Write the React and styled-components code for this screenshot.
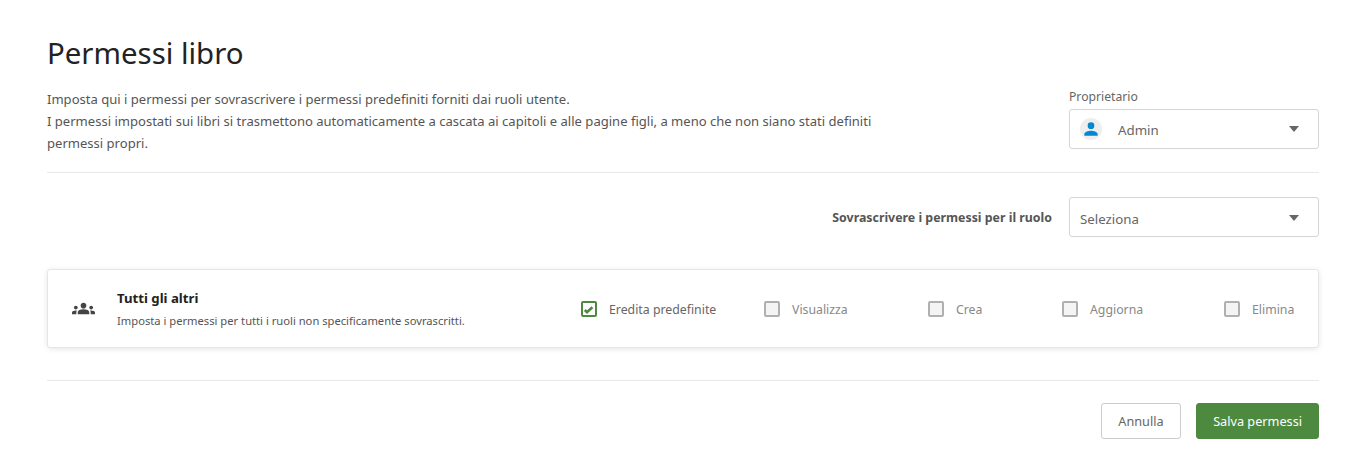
import React from "react";
import styled, { createGlobalStyle } from "styled-components";

const Global = createGlobalStyle`
  html, body { margin: 0; padding: 0; background: #fff; }
  body { font-family: "Noto Sans", "Open Sans", sans-serif; color: #444; }
`;

const Page = styled.div`
  width: 1364px;
  height: 460px;
  box-sizing: border-box;
  padding: 33px 45px 0 47px;
  overflow: hidden;
`;

const Title = styled.h1`
  margin: 0;
  font-size: 29.4px;
  line-height: 40px;
  font-weight: 400;
  color: #222;
`;

const Head = styled.div`
  display: flex;
  justify-content: space-between;
  align-items: flex-start;
  margin-top: 5px;
  padding-bottom: 18px;
  border-bottom: 1px solid #e8e8e8;
`;

const Intro = styled.p`
  margin: 10px 0 0;
  width: 850px;
  font-size: 13.05px;
  line-height: 22px;
  color: #555;
`;

const OwnerCol = styled.div`
  width: 250px;
  margin-top: 11px;
`;

const OwnerLabel = styled.div`
  font-size: 12.2px;
  line-height: 16px;
  color: #666;
  margin-bottom: 4px;
`;

const Select = styled.div`
  width: 250px;
  height: 40px;
  box-sizing: border-box;
  border: 1px solid #d4d4d4;
  border-radius: 3px;
  display: flex;
  align-items: center;
  padding: 0 19px 0 10px;
  font-size: 13.3px;
  color: #666;
`;

const SelectText = styled.span`
  padding-top: ${(p) => (p.$low ? "4px" : "2px")};
`;

const Avatar = styled.span`
  width: 22px;
  height: 22px;
  border-radius: 50%;
  background: #eee;
  display: flex;
  align-items: center;
  justify-content: center;
  margin-right: 16px;
`;

const Caret = styled.span`
  margin-left: auto;
  margin-top: ${(p) => (p.$low ? "2px" : "0")};
  width: 0;
  height: 0;
  border-left: 5.5px solid transparent;
  border-right: 5.5px solid transparent;
  border-top: 6px solid #666;
`;

const RoleRow = styled.div`
  display: flex;
  justify-content: flex-end;
  align-items: center;
  gap: 17px;
  margin-top: 24px;
`;

const RoleLabel = styled.label`
  font-size: 12.37px;
  font-weight: 700;
  color: #555;
`;

const Card = styled.div`
  margin-top: 32px;
  height: 79px;
  box-sizing: border-box;
  border: 1px solid #e6e6e6;
  border-radius: 3px;
  background: #fff;
  box-shadow: 0 1px 6px -1px rgba(0, 0, 0, 0.14);
  display: flex;
  align-items: center;
  padding: 0 24px;
`;

const RoleIcon = styled.svg`
  width: 23px;
  height: 23px;
  fill: #444;
  margin-right: 22px;
  flex: none;
`;

const RoleInfo = styled.div`
  width: 464px;
  flex: none;
  padding-top: 1px;
`;

const RoleName = styled.div`
  font-size: 13.2px;
  line-height: 18px;
  font-weight: 700;
  color: #222;
`;

const RoleDesc = styled.div`
  font-size: 11.2px;
  line-height: 16px;
  margin-top: 6px;
  color: #555;
`;

const Perms = styled.div`
  flex: 1;
  display: grid;
  grid-template-columns: 183px 164px 134px 162px auto;
  align-items: center;
`;

const Perm = styled.div`
  display: flex;
  align-items: center;
  gap: 12px;
  font-size: 12.3px;
  color: ${(p) => (p.$on ? "#666" : "#888")};
`;

const PermLabel = styled.span`
  padding-top: 2px;
`;

const Box = styled.span`
  width: 16px;
  height: 16px;
  box-sizing: border-box;
  border-radius: 2px;
  border: 2px solid ${(p) => (p.$on ? "#4d8a3f" : "#b0b0b0")};
  background: ${(p) => (p.$on ? "#fff" : "#f4f4f4")};
  display: flex;
  align-items: center;
  justify-content: center;
`;

const Foot = styled.div`
  margin-top: 32px;
  border-top: 1px solid #e8e8e8;
  padding-top: 22px;
  display: flex;
  justify-content: flex-end;
  gap: 15px;
`;

const Button = styled.button`
  height: 36px;
  box-sizing: border-box;
  padding: 0 ${(p) => (p.$primary ? "16px" : "16.5px")};
  border-radius: 3px;
  font-family: inherit;
  font-size: 12.7px;
  border: 1px solid ${(p) => (p.$primary ? "#4d8a3f" : "#ccc")};
  background: ${(p) => (p.$primary ? "#4d8a3f" : "#fff")};
  color: ${(p) => (p.$primary ? "#fff" : "#666")};
`;

const perms = [
  { label: "Eredita predefinite", on: true },
  { label: "Visualizza" },
  { label: "Crea" },
  { label: "Aggiorna" },
  { label: "Elimina" },
];

export default function App() {
  return (
    <>
      <Global />
      <Page>
        <Title>Permessi libro</Title>
        <Head>
          <Intro>
            Imposta qui i permessi per sovrascrivere i permessi predefiniti forniti dai ruoli utente.
            <br />
            I permessi impostati sui libri si trasmettono automaticamente a cascata ai capitoli e alle pagine figli, a meno che non siano stati definiti permessi propri.
          </Intro>
          <OwnerCol>
            <OwnerLabel>Proprietario</OwnerLabel>
            <Select>
              <Avatar>
                <svg width="16" height="16" viewBox="0 0 24 24" fill="#0288d1">
                  <path d="M12 12a5 5 0 1 0 0-10 5 5 0 0 0 0 10zm0 2.5c-3.3 0-10 1.7-10 5V22h20v-2.5c0-3.3-6.7-5-10-5z" />
                </svg>
              </Avatar>
              <SelectText>Admin</SelectText>
              <Caret />
            </Select>
          </OwnerCol>
        </Head>
        <RoleRow>
          <RoleLabel>Sovrascrivere i permessi per il ruolo</RoleLabel>
          <Select>
            <SelectText $low>Seleziona</SelectText>
            <Caret $low />
          </Select>
        </RoleRow>
        <Card>
          <RoleIcon viewBox="0 0 24 24">
            <path d="M12 12.75c1.63 0 3.07.39 4.24.9 1.08.48 1.76 1.56 1.76 2.73V18H6v-1.61c0-1.18.68-2.26 1.76-2.73 1.17-.52 2.61-.91 4.24-.91zM4 13c1.1 0 2-.9 2-2s-.9-2-2-2-2 .9-2 2 .9 2 2 2zm1.13 1.1C4.76 14.04 4.39 14 4 14c-.99 0-1.93.21-2.78.58C.48 14.9 0 15.62 0 16.43V18h4.5v-1.61c0-.83.23-1.61.63-2.29zM20 13c1.1 0 2-.9 2-2s-.9-2-2-2-2 .9-2 2 .9 2 2 2zm4 3.43c0-.81-.48-1.53-1.22-1.85-.85-.37-1.79-.58-2.78-.58-.39 0-.76.04-1.13.1.4.68.63 1.46.63 2.29V18H24v-1.57zM12 6c1.66 0 3 1.34 3 3s-1.34 3-3 3-3-1.34-3-3 1.34-3 3-3z" />
          </RoleIcon>
          <RoleInfo>
            <RoleName>Tutti gli altri</RoleName>
            <RoleDesc>Imposta i permessi per tutti i ruoli non specificamente sovrascritti.</RoleDesc>
          </RoleInfo>
          <Perms>
            {perms.map((p) => (
              <Perm key={p.label} $on={p.on}>
                <Box $on={p.on}>
                  {p.on && (
                    <svg width="12" height="12" viewBox="0 0 12 12" fill="none" stroke="#4d8a3f" strokeWidth="2.6">
                      <path d="M1.8 7 4 9.2 9.4 4.2" />
                    </svg>
                  )}
                </Box>
                <PermLabel>{p.label}</PermLabel>
              </Perm>
            ))}
          </Perms>
        </Card>
        <Foot>
          <Button>Annulla</Button>
          <Button $primary>Salva permessi</Button>
        </Foot>
      </Page>
    </>
  );
}
